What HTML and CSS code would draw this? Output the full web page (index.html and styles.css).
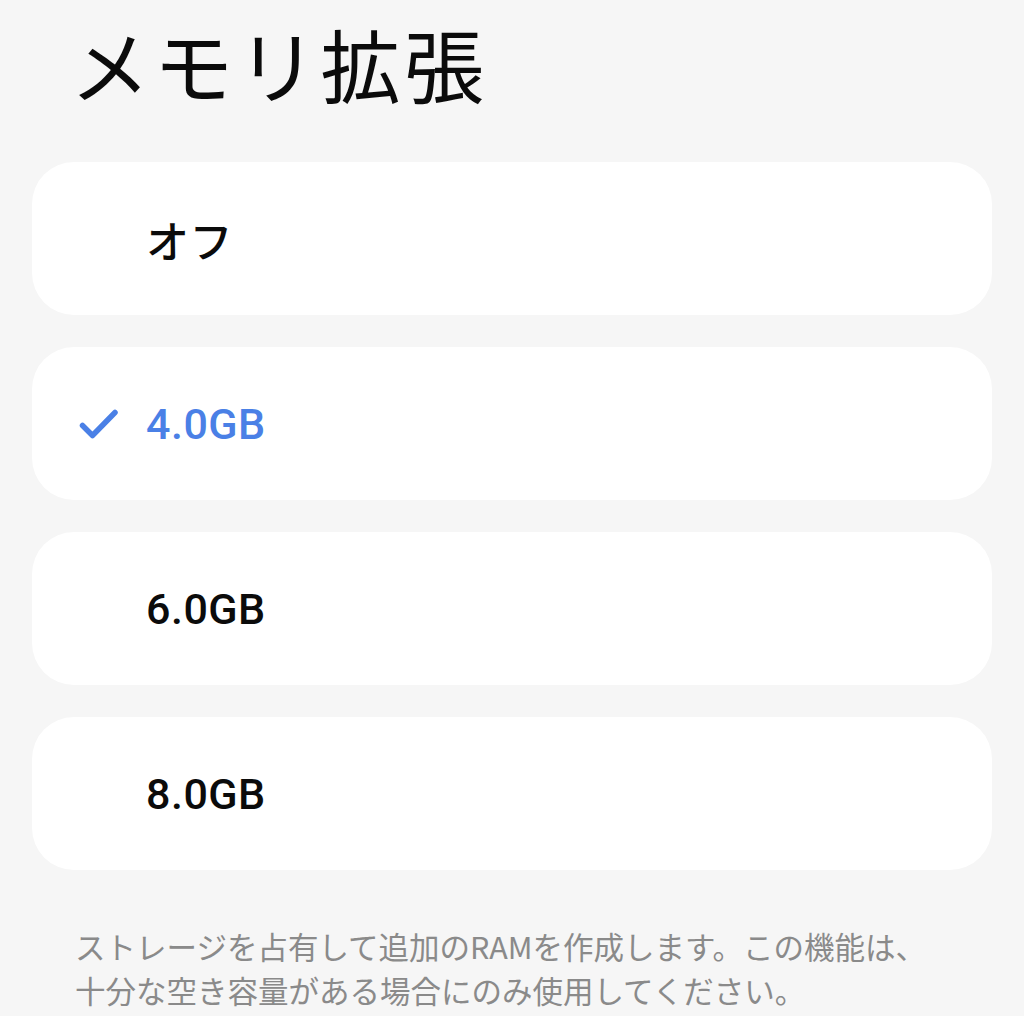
FILE: index.html
```html
<!DOCTYPE html>
<html lang="ja">

<head>
  <meta charset="UTF-8">
  <meta name="viewport" content="width=device-width, initial-scale=1.0">
  <title>メモリ拡張</title>
  <link rel="stylesheet" href="styles.css">
</head>

<body>
  <div class="page">
    <h1 class="title">メモリ拡張</h1>

    <div class="options">
      <div class="option">
        <span class="option-mark"></span>
        <span class="option-label">オフ</span>
      </div>
      <div class="option selected">
        <span class="option-mark">
          <svg width="40" height="32" viewBox="0 0 40 32">
            <path d="M3.5 17.5 L13.5 27.5 L36 4.5" fill="none" stroke="currentColor" stroke-width="5.5" stroke-linecap="round" stroke-linejoin="round"/>
          </svg>
        </span>
        <span class="option-label">4.0GB</span>
      </div>
      <div class="option">
        <span class="option-mark"></span>
        <span class="option-label">6.0GB</span>
      </div>
      <div class="option">
        <span class="option-mark"></span>
        <span class="option-label">8.0GB</span>
      </div>
    </div>

    <p class="note">ストレージを占有して追加のRAMを作成します。この機能は、十分な空き容量がある場合にのみ使用してください。</p>
  </div>
</body>

</html>
```

FILE: styles.css
```css
:root {
  --page-bg: #f6f6f6;
  --card-bg: #ffffff;
  --text-color: #0b0b0b;
  --accent-color: #4a80e6;
  --muted-color: #8a8a8a;
}

body {
  margin: 0;
  padding: 0;
  background-color: var(--page-bg);
  color: var(--text-color);
  font-family: Roboto, "Noto Sans CJK JP", sans-serif;
}

.page {
  padding: 0 32px;
}

.title {
  margin: 14px 0 0 38px;
  font-family: "Noto Sans CJK JP", sans-serif;
  font-size: 80px;
  font-weight: 400;
  line-height: 96px;
  letter-spacing: 3.5px;
}

.options {
  display: flex;
  flex-direction: column;
  gap: 32px;
  margin-top: 52px;
}

.option {
  display: flex;
  align-items: center;
  height: 153px;
  padding-left: 47px;
  background-color: var(--card-bg);
  border-radius: 42px;
}

.option-mark {
  display: flex;
  align-items: center;
  width: 67px;
  color: var(--accent-color);
}

.option-label {
  font-size: 43px;
  font-weight: 500;
  letter-spacing: 0.5px;
}

.selected .option-label {
  color: var(--accent-color);
}

.note {
  margin: 54px 0 0 43px;
  padding-right: 50px;
  font-family: "Noto Sans CJK JP", sans-serif;
  font-size: 30.5px;
  line-height: 44px;
  color: var(--muted-color);
}
```
